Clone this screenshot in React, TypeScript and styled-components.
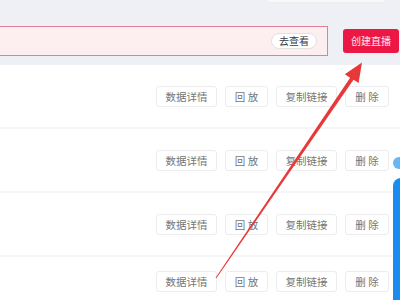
import React from "react";
import styled, { createGlobalStyle } from "styled-components";

const Global = createGlobalStyle`
  html, body { margin: 0; padding: 0; }
  body {
    width: 400px; height: 300px; overflow: hidden;
    background: #ffffff;
    font-family: "Noto Sans CJK SC", "Noto Sans", sans-serif;
  }
`;

const Page = styled.div`
  position: relative;
  width: 400px;
  height: 300px;
  overflow: hidden;
  background: #fff;
`;

const TopStrip = styled.div`
  display: flex;
  height: 3px;
  background: #eff0f5;
`;

const TopCard = styled.div`
  margin-left: 268px;
  width: 116px;
  height: 3px;
  background: #f9f9fb;
  border-bottom: 1px solid #ededf2;
  box-sizing: border-box;
`;

const Header = styled.div`
  display: flex;
  align-items: center;
  height: 62px;
  padding-top: 13px;
  box-sizing: border-box;
  background: #eff0f5;
`;

const Banner = styled.div`
  display: flex;
  align-items: center;
  justify-content: flex-end;
  width: 329px;
  height: 30px;
  margin-left: -1px;
  box-sizing: border-box;
  padding-right: 10px;
  background: #fdeff0;
  border: 1px solid #de7f9d;
`;

const Pill = styled.span`
  display: inline-flex;
  align-items: center;
  justify-content: center;
  width: 46px;
  height: 16px;
  border-radius: 8px;
  background: #fff;
  border: 1px solid #e2e2e2;
  box-sizing: border-box;
  font-size: 10px;
  color: #3a3a3a;
`;

const CreateButton = styled.div`
  display: flex;
  align-items: center;
  justify-content: center;
  margin-left: 15px;
  width: 56px;
  height: 24px;
  border-radius: 3px;
  background: #ec1745;
  color: #fde8ec;
  font-size: 10px;
`;

const Row = styled.div<{ $h: number }>`
  display: flex;
  align-items: center;
  justify-content: flex-end;
  height: ${(p) => p.$h}px;
  padding-right: 11px;
  box-sizing: border-box;
  border-top: 2px solid #f5f5f7;
  gap: 8px;
  &:first-child { border-top: none; }
`;

const ActionButton = styled.div<{ $w: number }>`
  display: flex;
  align-items: center;
  justify-content: center;
  width: ${(p) => p.$w}px;
  height: 21px;
  box-sizing: border-box;
  border: 1px solid #ececec;
  border-radius: 3px;
  background: #fff;
  color: #757575;
  font-size: 10.5px;
  white-space: pre;
`;

const BluePanel = styled.div`
  position: absolute;
  left: 393px;
  top: 178px;
  width: 20px;
  height: 140px;
  border-radius: 8px 0 0 0;
  background: #1a8cf0;
`;

const BlueDot = styled.div`
  position: absolute;
  left: 393px;
  top: 157px;
  width: 12px;
  height: 12px;
  border-radius: 50%;
  background: #6ab6f2;
`;

const ArrowSvg = styled.svg`
  position: absolute;
  left: 0;
  top: 0;
  pointer-events: none;
`;

const rows = [62, 64, 64, 50];

const actions: { label: string; w: number }[] = [
  { label: "数据详情", w: 61 },
  { label: "回 放", w: 43 },
  { label: "复制链接", w: 61 },
  { label: "删 除", w: 44 },
];

export default function App() {
  return (
    <Page>
      <Global />
      <TopStrip>
        <TopCard />
      </TopStrip>
      <Header>
        <Banner>
          <Pill>去查看</Pill>
        </Banner>
        <CreateButton>创建直播</CreateButton>
      </Header>
      <div>
        {rows.map((h, i) => (
          <Row key={i} $h={h}>
            {actions.map((a) => (
              <ActionButton key={a.label} $w={a.w}>
                {a.label}
              </ActionButton>
            ))}
          </Row>
        ))}
      </div>
      <BlueDot />
      <BluePanel />
      <ArrowSvg width="400" height="300" viewBox="0 0 400 300">
        <polygon
          points="215.6,277.7 350.1,77.7 344.8,74.2 362,62.5 358.6,83 353.5,79.7 216.4,278.3"
          fill="#e8393a"
        />
      </ArrowSvg>
    </Page>
  );
}
